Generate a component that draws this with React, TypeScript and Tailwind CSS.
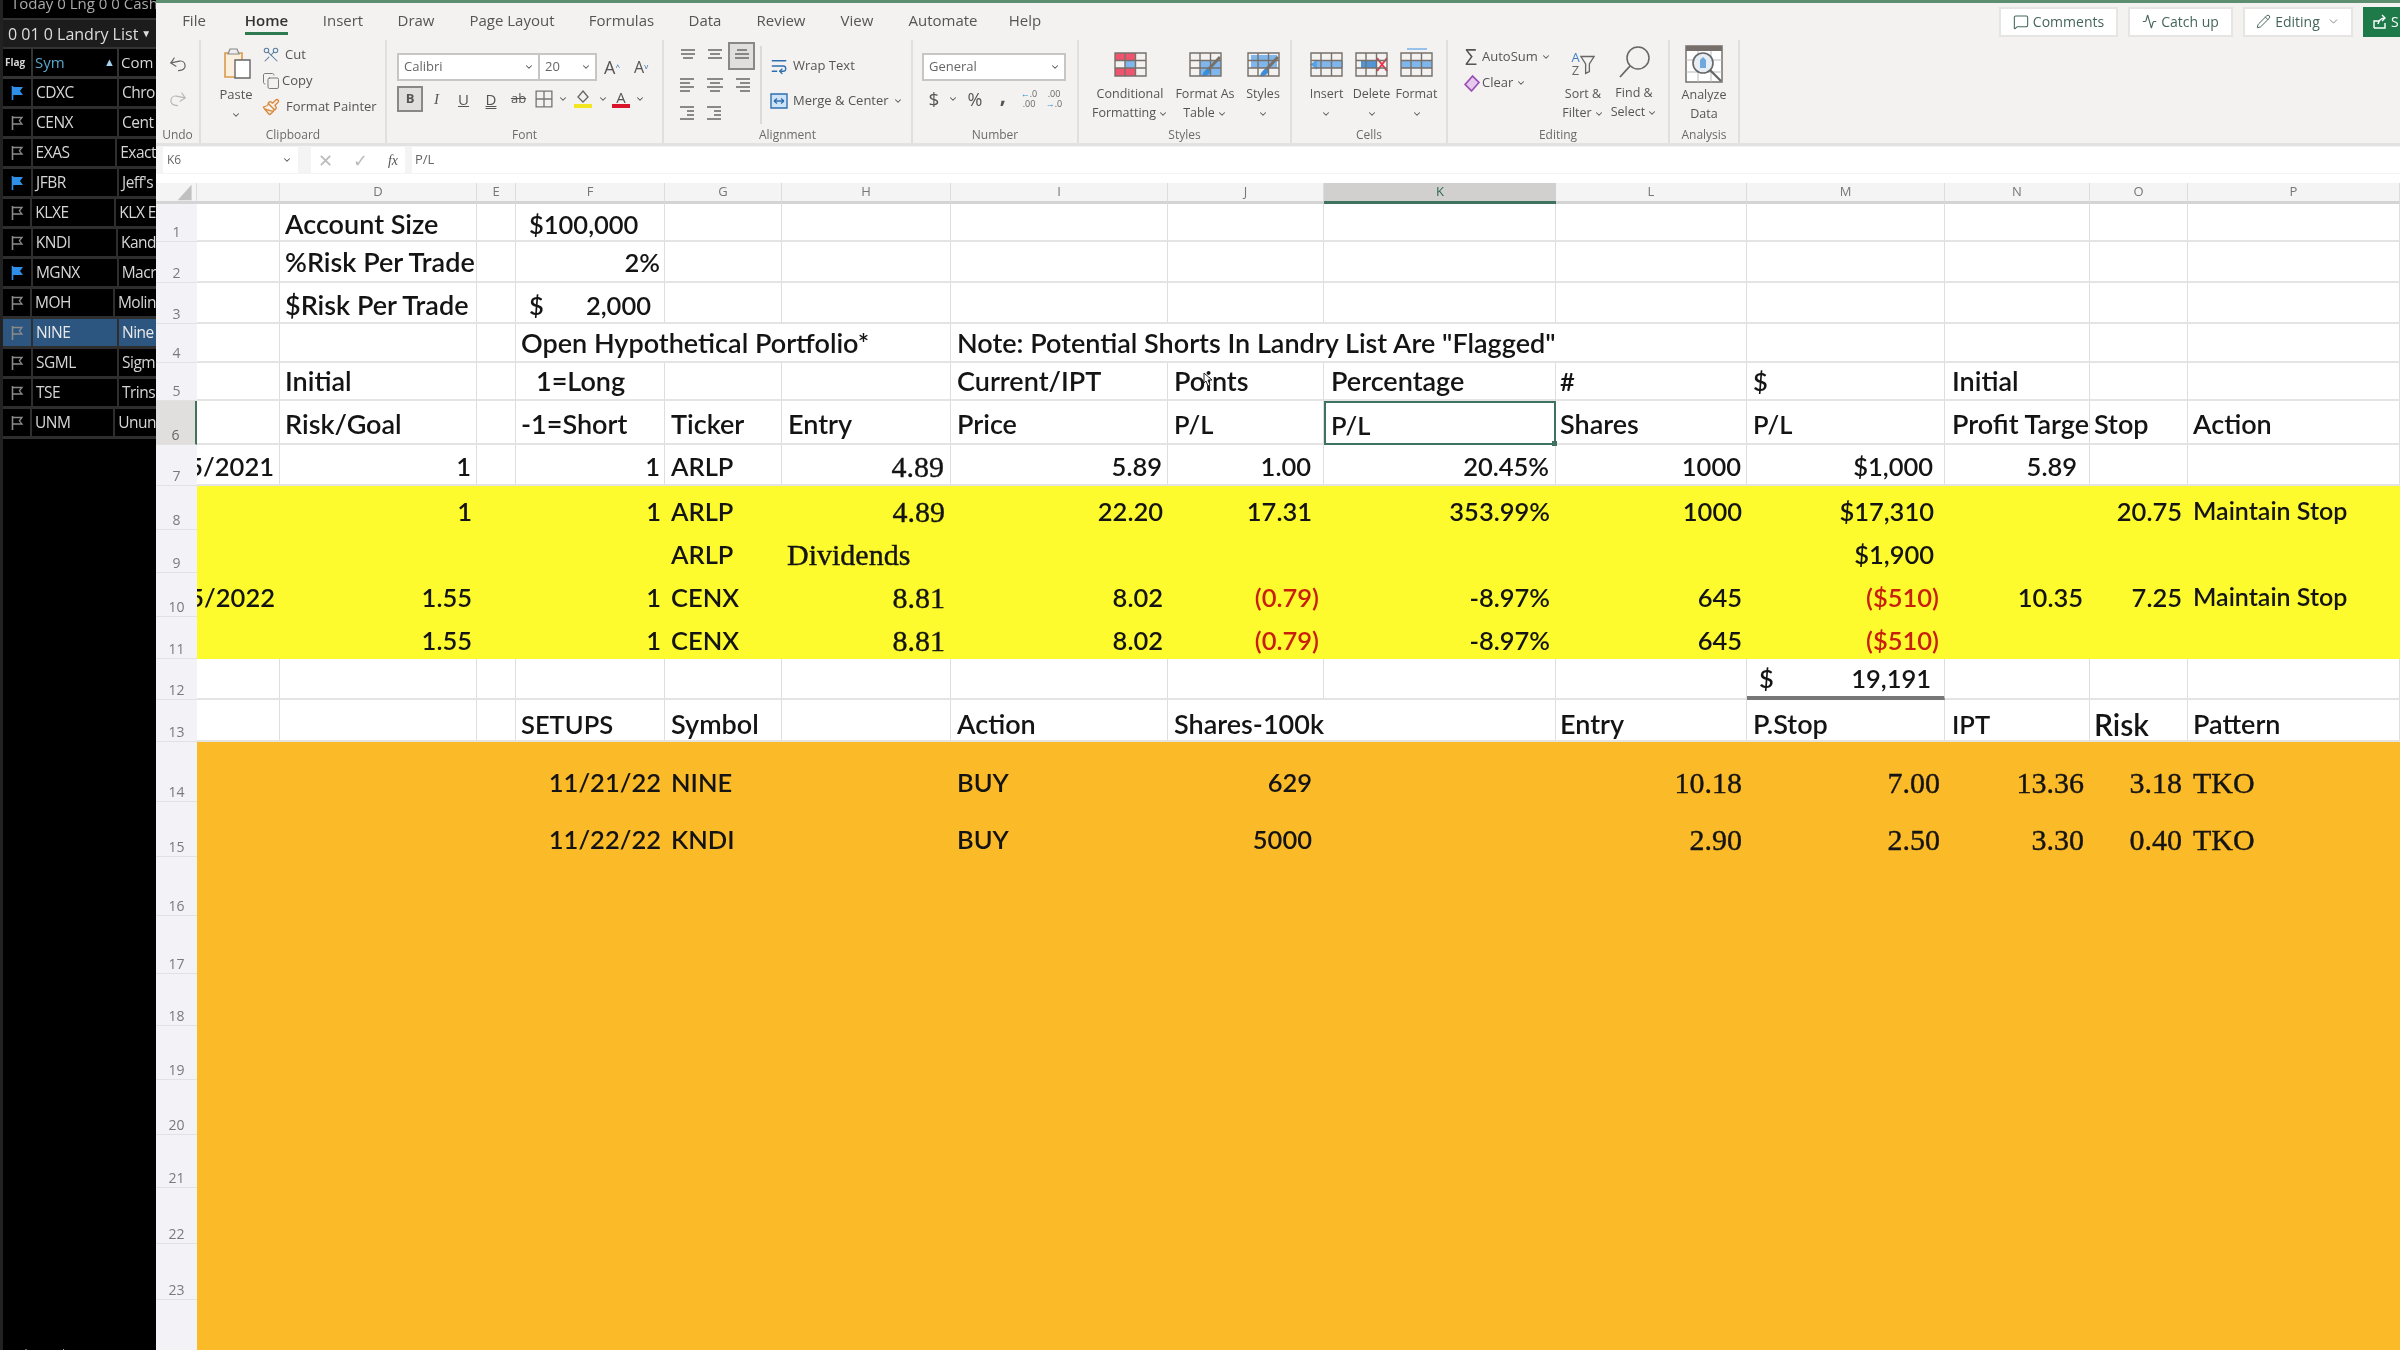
import React from 'react';
import clsx from 'clsx';
import { Undo2, Redo2, Scissors, Copy, Paintbrush, WrapText, MessageSquare, Activity, Pencil, ChevronDown } from 'lucide-react';

const tickers = [
    { sym: 'CDXC', co: 'Chro', on: true },
    { sym: 'CENX', co: 'Cent' },
    { sym: 'EXAS', co: 'Exact' },
    { sym: 'JFBR', co: "Jeff's", on: true },
    { sym: 'KLXE', co: 'KLX E' },
    { sym: 'KNDI', co: 'Kand' },
    { sym: 'MGNX', co: 'Macr', on: true },
    { sym: 'MOH', co: 'Molin' },
    { sym: 'NINE', co: 'Nine', sel: true },
    { sym: 'SGML', co: 'Sigm' },
    { sym: 'TSE', co: 'Trins' },
    { sym: 'UNM', co: 'Unun' },
];

const tabs = [
    { name: 'File', c: 'w-[66px]' },
    { name: 'Home', c: 'w-[79px]', active: true },
    { name: 'Insert', c: 'w-[74px]' },
    { name: 'Draw', c: 'w-[72px]' },
    { name: 'Page Layout', c: 'w-[120px]' },
    { name: 'Formulas', c: 'w-[99px]' },
    { name: 'Data', c: 'w-[68px]' },
    { name: 'Review', c: 'w-[84px]' },
    { name: 'View', c: 'w-[68px]' },
    { name: 'Automate', c: 'w-[104px]' },
    { name: 'Help', c: 'w-[60px]' },
];

const cols = ['C', 'D', 'E', 'F', 'G', 'H', 'I', 'J', 'K', 'L', 'M', 'N', 'O', 'P'];

type Cell = { t?: React.ReactNode; c?: string; nb?: boolean; own?: boolean };
type Row = { n: number; bg?: string; pad?: string; cells?: Record<string, Cell> };

const serif = 'font-["Liberation_Serif"] font-normal text-[30px] [-webkit-text-stroke:0.4px_#141414]';
const red = 'text-[#c81e0a]';

const rows: Row[] = [
    { n: 1, pad: 'pt-[4px]', cells: {
        D: { t: 'Account Size', c: 'pl-[5px]' },
        F: { t: '$100,000', c: 'pl-[13px]' },
    } },
    { n: 2, pad: 'pt-[1px]', cells: {
        D: { t: '%Risk Per Trade', c: 'pl-[5px]' },
        F: { t: '2%', c: 'justify-end pr-[4px]' },
    } },
    { n: 3, pad: 'pt-[5px]', cells: {
        D: { t: '$Risk Per Trade', c: 'pl-[5px]' },
        F: { t: <><span>$</span><span>2,000</span></>, c: 'justify-between pl-[13px] pr-[13px] text-[25.500px]' },
    } },
    { n: 4, pad: 'pt-[1px]', cells: {
        F: { t: 'Open Hypothetical Portfolio*', c: 'pl-[5px]', nb: true },
        G: { nb: true },
        I: { t: 'Note: Potential Shorts In Landry List Are "Flagged"', c: 'pl-[6px]', nb: true },
        J: { nb: true },
        K: { nb: true },
    } },
    { n: 5, pad: 'pt-[1px]', cells: {
        D: { t: 'Initial', c: 'pl-[5px]' },
        F: { t: '1=Long', c: 'pl-[20px]' },
        I: { t: 'Current/IPT', c: 'pl-[6px]' },
        J: { t: 'Points', c: 'pl-[6px] relative' },
        K: { t: 'Percentage', c: 'pl-[7px]' },
        L: { t: '#', c: 'pl-[4px]' },
        M: { t: '$', c: 'pl-[6px]' },
        N: { t: 'Initial', c: 'pl-[7px]' },
    } },
    { n: 6, pad: 'pt-[5px]', cells: {
        D: { t: 'Risk/Goal', c: 'pl-[5px]' },
        F: { t: '-1=Short', c: 'pl-[5px]' },
        G: { t: 'Ticker', c: 'pl-[6px]' },
        H: { t: 'Entry', c: 'pl-[6px]' },
        I: { t: 'Price', c: 'pl-[6px]' },
        J: { t: 'P/L', c: 'pl-[6px]' },
        K: { t: 'P/L', c: 'pl-[5px] border-2 border-[#3f7360] relative', own: true },
        L: { t: 'Shares', c: 'pl-[4px]' },
        M: { t: 'P/L', c: 'pl-[6px]' },
        N: { t: 'Profit Target', c: 'pl-[7px] overflow-hidden' },
        O: { t: 'Stop', c: 'pl-[4px]' },
        P: { t: 'Action', c: 'pl-[5px]' },
    } },
    { n: 7, pad: 'pt-[3px]', cells: {
        C: { t: '11/15/2021', c: 'justify-end pr-[5px] overflow-hidden' },
        D: { t: '1', c: 'justify-end pr-[5px]' },
        F: { t: '1', c: 'justify-end pr-[4px]' },
        G: { t: 'ARLP', c: 'pl-[6px]' },
        H: { t: '4.89', c: clsx('justify-end pr-[6px]', serif) },
        I: { t: '5.89', c: 'justify-end pr-[5px]' },
        J: { t: '1.00', c: 'justify-end pr-[12px]' },
        K: { t: '20.45%', c: 'justify-end pr-[6px]' },
        L: { t: '1000', c: 'justify-end pr-[5px]' },
        M: { t: '$1,000', c: 'justify-end pr-[11px]' },
        N: { t: '5.89', c: 'justify-end pr-[12px]' },
    } },
    { n: 8, bg: 'bg-[#fdfb2e]', pad: 'pt-[6px]', cells: {
        D: { t: '1', c: 'justify-end pr-[5px]' },
        F: { t: '1', c: 'justify-end pr-[4px]' },
        G: { t: 'ARLP', c: 'pl-[6px]' },
        H: { t: '4.89', c: clsx('justify-end pr-[6px]', serif) },
        I: { t: '22.20', c: 'justify-end pr-[5px]' },
        J: { t: '17.31', c: 'justify-end pr-[12px]' },
        K: { t: '353.99%', c: 'justify-end pr-[6px]' },
        L: { t: '1000', c: 'justify-end pr-[5px]' },
        M: { t: '$17,310', c: 'justify-end pr-[11px]' },
        O: { t: '20.75', c: 'justify-end pr-[6px]' },
        P: { t: 'Maintain Stop', c: 'pl-[5px] text-[25px]' },
    } },
    { n: 9, bg: 'bg-[#fdfb2e]', pad: 'pt-[5px]', cells: {
        G: { t: 'ARLP', c: 'pl-[6px]' },
        H: { t: 'Dividends', c: clsx('pl-[5px]', serif) },
        M: { t: '$1,900', c: 'justify-end pr-[11px]' },
    } },
    { n: 10, bg: 'bg-[#fdfb2e]', pad: 'pt-[4px]', cells: {
        C: { t: '11/15/2022', c: 'justify-end pr-[5px] overflow-hidden' },
        D: { t: '1.55', c: 'justify-end pr-[5px]' },
        F: { t: '1', c: 'justify-end pr-[4px]' },
        G: { t: 'CENX', c: 'pl-[6px]' },
        H: { t: '8.81', c: clsx('justify-end pr-[6px]', serif) },
        I: { t: '8.02', c: 'justify-end pr-[5px]' },
        J: { t: '(0.79)', c: clsx('justify-end pr-[5px]', red) },
        K: { t: '-8.97%', c: 'justify-end pr-[6px]' },
        L: { t: '645', c: 'justify-end pr-[5px]' },
        M: { t: '($510)', c: clsx('justify-end pr-[6px]', red) },
        N: { t: '10.35', c: 'justify-end pr-[7px]' },
        O: { t: '7.25', c: 'justify-end pr-[6px]' },
        P: { t: 'Maintain Stop', c: 'pl-[5px] text-[25px]' },
    } },
    { n: 11, bg: 'bg-[#fdfb2e]', pad: 'pt-[4px]', cells: {
        D: { t: '1.55', c: 'justify-end pr-[5px]' },
        F: { t: '1', c: 'justify-end pr-[4px]' },
        G: { t: 'CENX', c: 'pl-[6px]' },
        H: { t: '8.81', c: clsx('justify-end pr-[6px]', serif) },
        I: { t: '8.02', c: 'justify-end pr-[5px]' },
        J: { t: '(0.79)', c: clsx('justify-end pr-[5px]', red) },
        K: { t: '-8.97%', c: 'justify-end pr-[6px]' },
        L: { t: '645', c: 'justify-end pr-[5px]' },
        M: { t: '($510)', c: clsx('justify-end pr-[6px]', red) },
    } },
    { n: 12, pad: 'pt-[1px]', cells: {
        M: { t: <><span>$</span><span>19,191</span></>, c: 'justify-between pl-[12px] pr-[13px] text-[25.500px] border-r border-r-[#dedede] border-b-4 border-b-[#777777]', own: true },
    } },
    { n: 13, pad: 'pt-[8px]', cells: {
        F: { t: 'SETUPS', c: 'pl-[5px]' },
        G: { t: 'Symbol', c: 'pl-[6px]' },
        I: { t: 'Action', c: 'pl-[6px]' },
        J: { t: 'Shares-100k', c: 'pl-[6px]', nb: true },
        L: { t: 'Entry', c: 'pl-[4px]' },
        M: { t: 'P.Stop', c: 'pl-[6px]' },
        N: { t: 'IPT', c: 'pl-[7px]' },
        O: { t: 'Risk', c: 'pl-[4px] text-[30px]' },
        P: { t: 'Pattern', c: 'pl-[5px]' },
    } },
    { n: 14, bg: 'bg-[#fbba28]', pad: 'pt-[20px]', cells: {
        F: { t: '11/21/22', c: 'justify-end pr-[4px]' },
        G: { t: 'NINE', c: 'pl-[6px]' },
        I: { t: 'BUY', c: 'pl-[6px]' },
        J: { t: '629', c: 'justify-end pr-[12px]' },
        L: { t: '10.18', c: clsx('justify-end pr-[5px]', serif) },
        M: { t: '7.00', c: clsx('justify-end pr-[5px]', serif) },
        N: { t: '13.36', c: clsx('justify-end pr-[6px]', serif) },
        O: { t: '3.18', c: clsx('justify-end pr-[6px]', serif) },
        P: { t: 'TKO', c: clsx('pl-[5px]', serif) },
    } },
    { n: 15, bg: 'bg-[#fbba28]', pad: 'pt-[19px]', cells: {
        F: { t: '11/22/22', c: 'justify-end pr-[4px]' },
        G: { t: 'KNDI', c: 'pl-[6px]' },
        I: { t: 'BUY', c: 'pl-[6px]' },
        J: { t: '5000', c: 'justify-end pr-[12px]' },
        L: { t: '2.90', c: clsx('justify-end pr-[5px]', serif) },
        M: { t: '2.50', c: clsx('justify-end pr-[5px]', serif) },
        N: { t: '3.30', c: clsx('justify-end pr-[6px]', serif) },
        O: { t: '0.40', c: clsx('justify-end pr-[6px]', serif) },
        P: { t: 'TKO', c: clsx('pl-[5px]', serif) },
    } },
    ...[16, 17, 18, 19, 20, 21, 22, 23, 24].map(n => ({ n, bg: 'bg-[#fbba28]' })),
];

// Lato's lower case runs narrow next to the sheet's font, its digits and capitals don't
const sizeFor = (cell?: Cell) => {
    if (!cell || typeof cell.t !== 'string') return undefined;
    if (cell.c?.includes('text-[2') || cell.c?.includes('text-[3')) return undefined;
    return /[a-z]/.test(cell.t) ? 'text-[27px]' : 'text-[25.500px]';
};

const FlagIcon = ({ on }: { on?: boolean }) => (
    <svg viewBox="0 0 16 16" className="w-[16px] h-[16px]">
        <path d="M2.5 1v14" stroke={on ? '#2f8fe8' : '#8a8a8a'} strokeWidth="1.6" />
        {on ? (
            <path d="M3 2h10l-3 4 3 4H3z" fill="#2f8fe8" />
        ) : (
            <path d="M3 2.5h9l-2.6 3.3L12 9H3" fill="none" stroke="#8a8a8a" strokeWidth="1.3" />
        )}
    </svg>
);

const Chev = ({ c }: { c?: string }) => <ChevronDown className={clsx('w-[10px] h-[10px] text-[#555] shrink-0', c)} strokeWidth={2.5} />;

const Lines = ({ spec, c }: { spec: number[][]; c?: string }) => (
    <svg viewBox="0 0 18 16" className={clsx('w-[18px] h-[16px]', c)}>
        {spec.map((l, i) => (
            <path key={i} d={`M${l[0]} ${2 + i * 4}H${l[1]}`} stroke="#777" strokeWidth="1.7" />
        ))}
    </svg>
);

// table glyph with a coloured block, used by the Styles and Cells buttons
const TableIcon = ({ children, w = 'w-[33px]' }: { children?: React.ReactNode; w?: string }) => (
    <svg viewBox="0 0 33 25" className={clsx(w, 'h-[25px] overflow-visible')}>
        {children}
        <path d="M1 1h31v23H1zM1 8.500h31M1 16h31M11 1v23M21.500 1v23" fill="none" stroke="#77706a" strokeWidth="1.4" />
    </svg>
);

const Brush = () => (
    <>
        <path d="M31 5 17 20" stroke="#77706a" strokeWidth="3" />
        <path d="M19 17c-3 1-5 3-6 7 4 1 7-1 9-5z" fill="#3a8fdc" />
    </>
);

const VBtn = ({ icon, lines, w, gap = 'mt-[8px]', top = 'pt-[10px]', chev }: { icon: React.ReactNode; lines: string[]; w: string; gap?: string; top?: string; chev?: boolean }) => (
    <div className={clsx('flex flex-col items-center', w, top)}>
        {icon}
        <div className={clsx('flex flex-col items-center text-[12.500px] text-[#555] whitespace-nowrap', gap)}>
            {lines.map((l, i) => (
                <div key={l} className="flex items-center gap-[2px] h-[19px]">
                    {l}
                    {chev && i === lines.length - 1 && lines.length > 1 && <Chev />}
                </div>
            ))}
            {chev && lines.length === 1 && <Chev c="mt-[5px]" />}
        </div>
    </div>
);

const Group = ({ w, label, children }: { w: string; label: string; children: React.ReactNode }) => (
    <div className={clsx('flex flex-col h-full border-r-2 border-[#e1dfdd] shrink-0 pt-[2px]', w)}>
        <div className="flex h-[85px]">{children}</div>
        <div className="h-[16px] flex items-center justify-center text-[12px] text-[#6b6b6b]">{label}</div>
    </div>
);

const Select = ({ text, w }: { text: string; w: string }) => (
    <div className={clsx('h-[28px] bg-white border-2 border-[#c8c6c4] flex items-center justify-between pl-[5px] pr-[4px] text-[13px] text-[#666]', w)}>
        {text}
        <Chev />
    </div>
);

const Ribbon = () => (
    <div className="flex h-[106px] bg-[#f3f2f1] border-b-[3px] border-[#e3e2e0] font-['Open_Sans']">
        <Group w="w-[45px]" label="Undo">
            <div className="flex flex-col items-center w-full pt-[12px] gap-[15px]">
                <Undo2 className="w-[20px] h-[20px] text-[#666] -rotate-12" strokeWidth={1.5} />
                <Redo2 className="w-[20px] h-[20px] text-[#b8b8b8] rotate-12" strokeWidth={1.5} />
            </div>
        </Group>
        <Group w="w-[186px]" label="Clipboard">
            <div className="flex flex-col items-center w-[36px] ml-[17px] pt-[5px]">
                <svg viewBox="0 0 32 32" className="w-[32px] h-[32px]">
                    <path d="M5 6h17v24H5z" fill="#fbeedd" stroke="#d99a4e" strokeWidth="1.6" />
                    <path d="M10 2h7l2 5H8z" fill="#eee" stroke="#888" strokeWidth="1.2" />
                    <path d="M15 13h15v18H15z" fill="#fff" stroke="#666" strokeWidth="1.4" />
                </svg>
                <span className="text-[13px] text-[#555] mt-[6px]">Paste</span>
                <Chev c="mt-[5px]" />
            </div>
            <div className="flex flex-col ml-[8px] text-[13px] text-[#555]">
                <div className="flex items-center h-[26px] gap-[5px]"><Scissors className="w-[18px] h-[18px] text-[#5a7ea0] rotate-90" strokeWidth={1.4} />Cut</div>
                <div className="flex items-center h-[26px] gap-[2px]"><Copy className="w-[18px] h-[18px] text-[#777]" strokeWidth={1.3} />Copy</div>
                <div className="flex items-center h-[26px] gap-[6px]"><Paintbrush className="w-[18px] h-[18px] text-[#d9883a]" strokeWidth={1.8} />Format Painter</div>
            </div>
        </Group>
        <Group w="w-[277px]" label="Font">
            <div className="flex flex-col pl-[10px] pt-[11px]">
                <div className="flex items-center">
                    <Select text="Calibri" w="w-[143px]" />
                    <Select text="20" w="w-[59px] -ml-[2px]" />
                    <span className="text-[18px] text-[#555] ml-[7px] w-[30px]">A<sup className="text-[8px] text-[#2f6fb0]">^</sup></span>
                    <span className="text-[16px] text-[#555] w-[26px]">A<sup className="text-[8px] text-[#2f6fb0]">v</sup></span>
                </div>
                <div className="flex items-center h-[26px] mt-[5px] text-[15px] text-[#555]">
                    <div className="w-[26px] h-[26px] bg-[#e1dfdd] border-2 border-[#8a8886] flex items-center justify-center font-bold text-[13px]">B</div>
                    <div className="w-[27px] text-center italic font-['Liberation_Serif']">I</div>
                    <div className="w-[27px] text-center underline">U</div>
                    <div className="w-[28px] text-center underline decoration-double">D</div>
                    <div className="w-[27px] text-center line-through text-[13px]">ab</div>
                    <div className="w-[23px] flex justify-center">
                        <svg viewBox="0 0 16 16" className="w-[18px] h-[18px]"><path d="M1 1h14v14H1zM8 1v14M1 8h14" fill="none" stroke="#777" strokeWidth="1.2" /></svg>
                    </div>
                    <div className="w-[15px] flex justify-center"><Chev /></div>
                    <div className="w-[25px] flex flex-col items-center">
                        <svg viewBox="0 0 16 14" className="w-[16px] h-[14px]"><path d="M8 1l5 6-5 5-5-5z" fill="none" stroke="#666" strokeWidth="1.3" /></svg>
                        <div className="w-[18px] h-[4px] bg-[#f1e620]" />
                    </div>
                    <div className="w-[15px] flex justify-center"><Chev /></div>
                    <div className="w-[22px] flex flex-col items-center leading-[14px]">
                        <span>A</span>
                        <div className="w-[18px] h-[4px] bg-[#d9142b]" />
                    </div>
                    <div className="w-[16px] flex justify-center"><Chev /></div>
                </div>
            </div>
        </Group>
        <Group w="w-[249px]" label="Alignment">
            <div className="grid grid-cols-[27px_27px_27px] grid-rows-[28px_29px_28px] ml-[10px] place-items-center">
                <Lines spec={[[2, 16], [2, 16], [4, 14]]} />
                <Lines spec={[[2, 16], [4, 14], [2, 16]]} />
                <div className="w-[27px] h-[28px] border-2 border-[#8a8886] bg-[#e1dfdd] flex items-center justify-center"><Lines spec={[[4, 14], [2, 16], [2, 16]]} /></div>
                <Lines spec={[[1, 15], [1, 11], [1, 15], [1, 11]]} c="h-[18px]" />
                <Lines spec={[[1, 17], [4, 14], [1, 17], [4, 14]]} c="h-[18px]" />
                <Lines spec={[[3, 17], [7, 17], [3, 17], [7, 17]]} c="h-[18px]" />
                <Lines spec={[[1, 15], [8, 15], [8, 15], [1, 15]]} c="h-[18px]" />
                <Lines spec={[[1, 15], [8, 15], [8, 15], [1, 15]]} c="h-[18px]" />
            </div>
            <div className="w-[2px] h-[78px] bg-[#dcdad8] ml-[5px] mt-[4px]" />
            <div className="flex flex-col pt-[6px] ml-[8px] text-[13px] text-[#555]">
                <div className="flex items-center h-[35px] gap-[5px]"><WrapText className="w-[18px] h-[18px] text-[#2f6fb0]" strokeWidth={1.7} />Wrap Text</div>
                <div className="flex items-center h-[35px] gap-[5px]">
                    <svg viewBox="0 0 18 18" className="w-[18px] h-[18px]"><path d="M1 2h16v14H1z" fill="#cfe3f6" stroke="#2f6fb0" strokeWidth="1.4" /><path d="M4 9h10M4 9l3-2.500M4 9l3 2.500M14 9l-3-2.500M14 9l-3 2.500" fill="none" stroke="#2f6fb0" strokeWidth="1.3" /></svg>
                    Merge &amp; Center<Chev c="-ml-[1px]" />
                </div>
            </div>
        </Group>
        <Group w="w-[166px]" label="Number">
            <div className="flex flex-col pl-[9px] pt-[11px]">
                <Select text="General" w="w-[144px]" />
                <div className="flex items-center h-[26px] mt-[5px] text-[#555]">
                    <div className="w-[24px] text-center text-[19px]">$</div>
                    <div className="w-[14px] flex justify-center"><Chev /></div>
                    <div className="w-[30px] text-center text-[18px]">%</div>
                    <div className="w-[26px] text-center text-[22px] font-bold leading-[10px] -mt-[10px]">,</div>
                    <div className="w-[26px] text-center text-[9px] leading-[10px] text-[#666]"><span className="text-[#2f8fd8]">←</span>.0<br />.00</div>
                    <div className="w-[24px] text-center text-[9px] leading-[10px] text-[#666]">.00<br /><span className="text-[#2f8fd8]">→</span>.0</div>
                </div>
            </div>
        </Group>
        <Group w="w-[213px]" label="Styles">
            <div className="w-[13px]" />
            <VBtn w="w-[76px]" lines={['Conditional', 'Formatting']} chev icon={
                <TableIcon>
                    <path d="M1 1h21v7H1zM1 16h21v8H1z" fill="#f0536e" />
                    <path d="M11 8h10v8H11z" fill="#7fb7ec" />
                </TableIcon>
            } />
            <VBtn w="w-[74px]" lines={['Format As', 'Table']} chev icon={
                <TableIcon>
                    <path d="M11 8.500h21V24H11z" fill="#7fb7ec" />
                    <Brush />
                </TableIcon>
            } />
            <VBtn w="w-[42px]" lines={['Styles']} chev icon={
                <TableIcon>
                    <path d="M4 3h26v13H4z" fill="#7fb7ec" />
                    <Brush />
                </TableIcon>
            } />
        </Group>
        <Group w="w-[156px]" label="Cells">
            <div className="w-[12px]" />
            <VBtn w="w-[45px]" lines={['Insert']} chev icon={
                <TableIcon>
                    <path d="M6 9h27v7H6z" fill="#7fb7ec" />
                    <path d="M0 12.500l7-5v10z" fill="#5aa2e4" />
                </TableIcon>
            } />
            <VBtn w="w-[45px]" lines={['Delete']} chev icon={
                <TableIcon>
                    <path d="M6 9h15v7H6z" fill="#4f95d8" />
                    <path d="M22 6l10 13M32 6 22 19" stroke="#e8344a" strokeWidth="2" />
                </TableIcon>
            } />
            <VBtn w="w-[45px]" lines={['Format']} chev icon={
                <TableIcon>
                    <path d="M1 9h31v7H1z" fill="#7fb7ec" />
                    <path d="M7-3h20" stroke="#5aa2e4" strokeWidth="1.2" />
                </TableIcon>
            } />
        </Group>
        <Group w="w-[222px]" label="Editing">
            <div className="flex flex-col w-[110px] pl-[12px] pt-[2px] text-[13px] text-[#555] shrink-0">
                <div className="flex items-center h-[26px]"><span className="w-[22px] text-[21px] text-center leading-none">Σ</span>AutoSum<Chev c="ml-[3px]" /></div>
                <div className="flex items-center h-[26px]">
                    <span className="w-[22px] flex justify-center">
                        <svg viewBox="0 0 16 16" className="w-[17px] h-[17px]"><path d="M9 1l6 6-7 8-6-6z" fill="#e8c9ee" stroke="#9a4fb5" strokeWidth="1.6" /></svg>
                    </span>
                    Clear<Chev c="ml-[3px]" />
                </div>
            </div>
            <VBtn w="w-[50px]" lines={['Sort &', 'Filter']} chev gap="mt-[7px]" top="pt-[8px]" icon={
                <div className="flex items-center h-[28px]">
                    <div className="flex flex-col text-[13px] leading-[13px] items-center text-[#666]"><span className="text-[#3d7fc1]">A</span><span>Z</span></div>
                    <svg viewBox="0 0 16 22" className="w-[15px] h-[22px]"><path d="M1 3h14L10 11v8l-4 2V11z" fill="none" stroke="#666" strokeWidth="1.4" /></svg>
                </div>
            } />
            <VBtn w="w-[52px]" lines={['Find &', 'Select']} chev gap="mt-[5px]" top="pt-[3px]" icon={
                <svg viewBox="0 0 33 34" className="w-[33px] h-[34px]"><circle cx="20" cy="13" r="11" fill="none" stroke="#666" strokeWidth="1.5" /><path d="M12 21 2 32" stroke="#666" strokeWidth="1.8" /></svg>
            } />
        </Group>
        <Group w="w-[70px]" label="Analysis">
            <VBtn w="w-full" lines={['Analyze', 'Data']} gap="mt-[3px]" top="pt-[3px]" icon={
                <svg viewBox="0 0 38 38" className="w-[38px] h-[38px]">
                    <path d="M1 1h36v36H1z" fill="#fff" stroke="#77706a" strokeWidth="1.5" />
                    <path d="M1 1h36v5H1z" fill="#77706a" />
                    <path d="M1 15h36M1 27h36M13 6v31M26 6v31" stroke="#bbb" strokeWidth="1" />
                    <circle cx="18" cy="18" r="10" fill="#e8eef5" stroke="#666" strokeWidth="1.6" />
                    <path d="M15 23v-8l3-3 3 3v8z" fill="#6fa8dc" />
                    <path d="M25 25l11 11" stroke="#666" strokeWidth="2.2" />
                </svg>
            } />
        </Group>
    </div>
);

const TopButton = ({ w, children }: { w: string; children: React.ReactNode }) => (
    <div className={clsx('h-[30px] bg-white border-2 border-[#e6e5e3] flex items-center justify-center gap-[4px] text-[14px] text-[#46665a]', w)}>{children}</div>
);

const Sheet = () => (
    <div className="grid grid-cols-[41px_83px_197px_39px_149px_117px_169px_217px_156px_232px_191px_198px_145px_98px_212px] grid-rows-[21px_38px_41px_41px_39px_38px_44px_41px_44px_43px_44px_42px_41px_42px_60px_55px_59px_58px_52px_54px_55px_53px_56px_56px_80px] bg-white flex-1 min-h-0 overflow-hidden font-['Lato'] font-semibold text-[#141414]">
        <div className="bg-[#f4f4f4] border-b-[3px] border-[#d4d4d4] flex items-end justify-end pr-[2px] border-r border-r-[#dcdcdc] overflow-hidden">
            <svg viewBox="0 0 20 22" className="w-[18px] h-[18px]"><path d="M18 2v19H1z" fill="#c0c0c0" /></svg>
        </div>
        {cols.map(c => (
            <div
                key={c}
                className={clsx(
                    'flex items-center justify-center border-b-[3px] text-[13px] font-normal font-["Open_Sans"]',
                    c === 'K' ? 'bg-[#d2d0ce] border-[#3f7360] text-[#2c6a4f]' : 'bg-[#f4f4f4] border-[#d4d4d4] text-[#777] border-r border-r-[#dcdcdc]'
                )}
            >
                {c === 'C' ? '' : c}
            </div>
        ))}
        {rows.map(row => (
            <React.Fragment key={row.n}>
                <div
                    className={clsx(
                        'flex items-end justify-center pb-[2px] text-[14px] leading-[14px] font-normal font-["Open_Sans"] text-[#7a7a7a] border-b border-[#e2e2e2]',
                        row.n === 6 ? 'bg-[#e0dfdd] border-r-2 border-r-[#3f7360] text-[#666]' : 'bg-[#f3f3f7]'
                    )}
                >
                    {row.n}
                </div>
                {cols.map(col => {
                    const cell = row.cells?.[col];
                    const grid = !row.bg && !cell?.own;
                    return (
                        <div
                            key={col}
                            className={clsx(
                                'flex items-center whitespace-nowrap min-w-0',
                                row.bg,
                                row.pad,
                                grid && 'border-b-2 border-[#e4e4e4]',
                                grid && !cell?.nb && 'border-r border-r-[#dedede]',
                                sizeFor(cell),
                                cell?.c
                            )}
                        >
                            {cell?.t}
                            {row.n === 5 && col === 'J' && (
                                <svg viewBox="0 0 14 14" className="absolute left-[33px] top-[9px] w-[14px] h-[14px]"><path d="M3 1l8 7H7l2 5-2 1-2-5-2 2z" fill="#fff" stroke="#222" strokeWidth="1" /></svg>
                            )}
                            {row.n === 6 && col === 'K' && <span className="absolute -right-[3px] -bottom-[3px] w-[5px] h-[5px] bg-[#3f7360]" />}
                        </div>
                    );
                })}
            </React.Fragment>
        ))}
    </div>
);

export default function App() {
    return (
        <div className="flex w-[2400px] h-[1350px] overflow-hidden bg-black blur-[0.5px]">
            <div className="w-[156px] shrink-0 flex flex-col bg-black border-l-[3px] border-[#222] text-[#d6d6d6] font-['Open_Sans']">
                <div className="h-[18px] overflow-hidden">
                    <div className="-mt-[8px] pl-[8px] text-[15px] text-[#aaa] whitespace-nowrap">Today 0 Lng 0 0 Cash</div>
                </div>
                <div className="h-[31px] bg-[#1c1c1c] border-y-2 border-[#333] pl-[5px] flex items-center text-[16px] font-medium text-[#ddd] whitespace-nowrap overflow-hidden">
                    0 01 0 Landry List <span className="text-[10px] ml-[3px]">▼</span>
                </div>
                <div className="flex h-[30px] items-center border-b-[3px] border-[#333] text-[15px] pl-[2px]">
                    <div className="w-[28px] text-[10px] font-bold border-r-2 border-[#333] h-full flex items-center">Flag</div>
                    <div className="w-[86px] pl-[2px] text-[#5aa7c9] flex justify-between items-center border-r-2 border-[#333] h-full pr-[2px]">Sym<span className="text-[#a5d4ec] text-[11px]">▲</span></div>
                    <div className="pl-[2px]">Com</div>
                </div>
                {tickers.map(t => (
                    <div key={t.sym} className={clsx('flex h-[30px] items-center border-b-[3px] border-[#2e2e2e] text-[15.500px] pl-[2px] overflow-hidden whitespace-nowrap', t.sel && 'bg-[#2c5680] text-[#e8e8e8]')}>
                        <div className="w-[28px] flex justify-center h-full items-center border-r-2 border-[#2e2e2e]"><FlagIcon on={t.on} /></div>
                        <div className="w-[86px] pl-[3px] h-full flex items-center border-r-2 border-[#2e2e2e] tracking-[-0.5px]">{t.sym}</div>
                        <div className="pl-[3px] tracking-[-0.5px]">{t.co}</div>
                    </div>
                ))}
                <div className="mt-auto h-[4px] overflow-hidden">
                    <div className="pl-[8px] text-[12px] text-[#bbb] whitespace-nowrap">Avl Liquid Current</div>
                </div>
            </div>
            <div className="flex-1 flex flex-col min-w-0 bg-white">
                <div className="h-[3px] bg-[#5c8f6f]" />
                <div className="flex items-center h-[37px] bg-[#f3f2f1] font-['Open_Sans']">
                    <div className="flex text-[15px] text-[#555] self-start pt-[3px] pl-[5px]">
                        {tabs.map(t => (
                            <div key={t.name} className={clsx('flex justify-center', t.c)}>
                                <span className={clsx('h-[29px] pt-[5px] leading-[18px]', t.active && 'border-b-[3px] border-[#2f7a50] font-semibold text-[#333]')}>{t.name}</span>
                            </div>
                        ))}
                    </div>
                    <div className="flex-1" />
                    <div className="flex items-center gap-[10px]">
                        <TopButton w="w-[119px]"><MessageSquare className="w-[16px] h-[16px]" strokeWidth={1.6} />Comments</TopButton>
                        <TopButton w="w-[105px]"><Activity className="w-[15px] h-[15px]" strokeWidth={1.8} />Catch up</TopButton>
                        <TopButton w="w-[110px]"><Pencil className="w-[15px] h-[15px]" strokeWidth={1.6} />Editing<ChevronDown className="w-[13px] h-[13px] ml-[3px] text-[#777]" strokeWidth={1.6} /></TopButton>
                        <div className="w-[37px] h-[30px] bg-[#1f7a4a] flex items-center pl-[9px] gap-[3px] text-white text-[14px] overflow-hidden">
                            <svg viewBox="0 0 16 16" className="w-[16px] h-[16px] shrink-0"><path d="M2 14V7h5M2 14h11V9" fill="none" stroke="#fff" strokeWidth="1.4" /><path d="M6 10c1-4 3-6 7-6M10 1l3 3-3 3" fill="none" stroke="#fff" strokeWidth="1.4" /></svg>
                            S
                        </div>
                    </div>
                </div>
                <Ribbon />
                <div className="flex h-[28px] gap-[13px] bg-[#f4f4f4] pt-[1px] font-['Open_Sans'] text-[#666]">
                    <div className="ml-[7px] w-[135px] h-[26px] bg-white flex items-center justify-between pl-[4px] pr-[6px] text-[12px]">K6<Chev /></div>
                    <div className="w-[94px] h-[26px] bg-white flex items-center justify-between px-[7px]">
                        <span className="text-[18px] text-[#bbb] leading-none">✕</span>
                        <span className="text-[18px] text-[#bbb] leading-none">✓</span>
                        <span className="text-[14px] italic font-['Liberation_Serif'] text-[#555]">fx</span>
                    </div>
                    <div className="flex-1 -ml-[6px] h-[26px] bg-white flex items-center pl-[3px] text-[13px]">P/L</div>
                </div>
                <div className="h-[9px] bg-white shrink-0" />
                <Sheet />
            </div>
        </div>
    );
}
